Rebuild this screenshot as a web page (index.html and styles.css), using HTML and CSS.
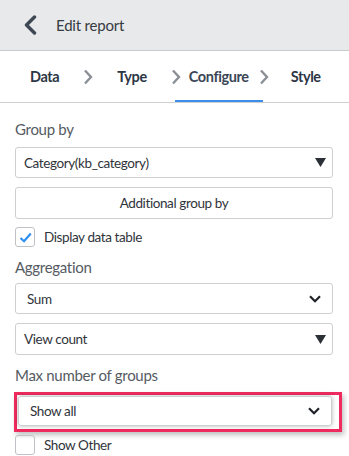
FILE: index.html
```html
<!DOCTYPE html>
<html lang="en">
<head>
    <meta charset="UTF-8">
    <meta name="viewport" content="width=device-width, initial-scale=1.0">
    <title>Edit report</title>
    <link rel="stylesheet" href="styles.css">
</head>
<body>
    <div class="header">
        <svg class="back" width="14" height="20" viewBox="0 0 14 20"><path d="M11.5 2 L3.5 10 L11.5 18" fill="none" stroke="#3e4754" stroke-width="3.4" stroke-linecap="round" stroke-linejoin="round"/></svg>
        <span class="header-title">Edit report</span>
    </div>

    <div class="steps">
        <span class="step">Data</span>
        <span class="sep"><svg width="10" height="16" viewBox="0 0 10 16"><path d="M2 1.5 L8 8 L2 14.5" fill="none" stroke="#8b9097" stroke-width="2.4"/></svg></span>
        <span class="step">Type</span>
        <span class="sep"><svg width="10" height="16" viewBox="0 0 10 16"><path d="M2 1.5 L8 8 L2 14.5" fill="none" stroke="#8b9097" stroke-width="2.4"/></svg></span>
        <span class="step active">Configure</span>
        <span class="sep sep-after"><svg width="10" height="16" viewBox="0 0 10 16"><path d="M2 1.5 L8 8 L2 14.5" fill="none" stroke="#8b9097" stroke-width="2.4"/></svg></span>
        <span class="step">Style</span>
    </div>

    <div class="form">
        <div class="label">Group by</div>
        <div class="select">
            <span>Category(kb_category)</span>
            <svg class="caret" width="11" height="9" viewBox="0 0 11 9"><path d="M0 0 H11 L5.5 9 Z" fill="#2b2f36"/></svg>
        </div>
        <div class="button">Additional group by</div>
        <div class="check-row">
            <span class="checkbox">
                <svg width="13" height="11" viewBox="0 0 13 11"><path d="M1.5 6 L5 9.2 L11.8 1.5" fill="none" stroke="#2f8ff0" stroke-width="2.2"/></svg>
            </span>
            <span>Display data table</span>
        </div>

        <div class="label label-gap">Aggregation</div>
        <div class="select select-native">
            <span>Sum</span>
            <svg class="chevron" width="12" height="8" viewBox="0 0 12 8"><path d="M1 1.2 L6 6.2 L11 1.2" fill="none" stroke="#1e2126" stroke-width="2.2"/></svg>
        </div>
        <div class="select select-next">
            <span>View count</span>
            <svg class="caret" width="11" height="9" viewBox="0 0 11 9"><path d="M0 0 H11 L5.5 9 Z" fill="#2b2f36"/></svg>
        </div>

        <div class="label label-gap">Max number of groups</div>
        <div class="highlight">
            <div class="select select-native select-shadow">
                <span>Show all</span>
                <svg class="chevron" width="12" height="8" viewBox="0 0 12 8"><path d="M1 1.2 L6 6.2 L11 1.2" fill="none" stroke="#1e2126" stroke-width="2.2"/></svg>
            </div>
        </div>
        <div class="check-row check-last">
            <span class="checkbox"></span>
            <span>Show Other</span>
        </div>
    </div>
</body>
</html>
```

FILE: styles.css
```css
* {
    margin: 0;
    padding: 0;
    box-sizing: border-box;
}

body {
    font-family: "Source Sans Pro", Lato, "Noto Sans", sans-serif;
    background: #fff;
    color: #333;
    width: 349px;
    overflow: hidden;
}

.header {
    height: 51px;
    background: #e8e9eb;
    border-bottom: 1px solid #c9cacc;
    display: flex;
    align-items: center;
    padding-left: 23px;
}

.back {
    margin-right: 19px;
}

.header-title {
    font-size: 15px;
    letter-spacing: -0.2px;
    color: #363b42;
}

.steps {
    display: flex;
    height: 52px;
    padding-left: 30px;
    border-bottom: 1px solid #cfcfcf;
}

.step {
    display: flex;
    align-items: center;
    font-size: 14.5px;
    letter-spacing: -0.4px;
    font-weight: 700;
    color: #2c3644;
}

.step.active {
    padding: 0 14px;
    margin: 0 -28px 0 -30px;
    color: #3a4656;
    box-shadow: inset 0 -2px 0 #3b8fea;
}

.sep {
    display: flex;
    align-items: center;
    margin: 0 24px;
}

.sep-after {
    margin-right: 22px;
}

.form {
    padding: 0 16px 0 15px;
}

.label {
    font-size: 15px;
    letter-spacing: -0.3px;
    line-height: 20px;
    color: #555b63;
    margin-top: 16px;
}

.label-gap {
    margin-top: 10px;
}

.select {
    height: 31px;
    margin-top: 8px;
    border: 1px solid #cdcfd2;
    border-radius: 3px;
    display: flex;
    align-items: center;
    justify-content: space-between;
    padding: 0 6px 0 8px;
    font-size: 13.5px;
    letter-spacing: -0.4px;
    color: #30343a;
}

.select-native {
    padding: 0 11px 0 11px;
    margin-top: 6px;
}

.select-next {
    margin-top: 9px;
    height: 32px;
    padding-left: 8px;
}

.button {
    height: 32px;
    margin-top: 9px;
    border: 1px solid #cdcfd2;
    border-radius: 3px;
    display: flex;
    align-items: center;
    justify-content: center;
    font-size: 13.5px;
    letter-spacing: -0.4px;
    color: #30343a;
}

.check-row {
    display: flex;
    align-items: center;
    margin-top: 8px;
    font-size: 13.5px;
    letter-spacing: -0.4px;
    color: #30343a;
}

.checkbox {
    width: 20px;
    height: 20px;
    border: 1px solid #bfc2c6;
    border-radius: 3px;
    margin-right: 9px;
    display: flex;
    align-items: center;
    justify-content: center;
}

.highlight {
    margin: 7px -9px 0 -1px;
    border: 3px solid #ef2a5f;
    padding: 1px 7px 3px 1px;
    box-shadow: 2px 3px 5px rgba(0, 0, 0, 0.25);
}

.highlight .select {
    margin-top: 0;
    height: 30px;
}

.select-shadow {
    box-shadow: 0 0 4px rgba(0, 0, 0, 0.3);
}

.check-last {
    margin-top: 3px;
}
```
